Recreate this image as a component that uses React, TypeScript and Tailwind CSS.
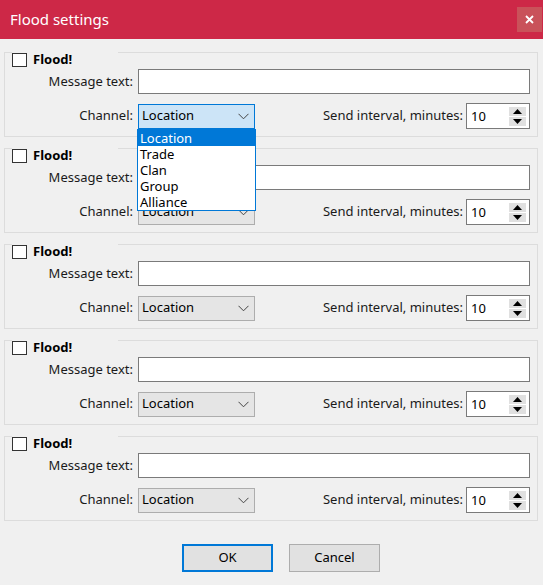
import React from "react";

const FONT = { fontFamily: '"Segoe UI", "Noto Sans", "DejaVu Sans", sans-serif' };

function Chevron() {
  return (
    <svg width="11" height="7" viewBox="0 0 11 7" className="shrink-0">
      <polyline points="0.5,0.8 5.5,5.8 10.5,0.8" fill="none" stroke="#444" strokeWidth="1" />
    </svg>
  );
}

function Spin() {
  return (
    <div className="flex h-[26px] w-[64px] items-center border border-[#7a7a7a] bg-white pl-[4px] pr-[3px]">
      <span className="flex-1 text-[13px] leading-none text-black">10</span>
      <div className="flex flex-col gap-[1px]">
        <div className="flex h-[9px] w-[17px] items-center justify-center bg-[#e0e0e0]">
          <svg width="9" height="5" viewBox="0 0 9 5">
            <polygon points="0,5 4.5,0 9,5" fill="#000" />
          </svg>
        </div>
        <div className="flex h-[9px] w-[17px] items-center justify-center bg-[#e0e0e0]">
          <svg width="9" height="5" viewBox="0 0 9 5">
            <polygon points="0,0 9,0 4.5,5" fill="#000" />
          </svg>
        </div>
      </div>
    </div>
  );
}

function Group({ focused, open }: { focused?: boolean; open?: boolean }) {
  return (
    <div className="relative h-[85px] border border-[#dcdcdc] pt-[16px] pb-[8px] pr-[7px]">
      <div className="absolute left-[7px] top-[-1px] flex h-[15px] w-[106px] items-center gap-[6px] bg-[#f0f0f0]">
        <div className="h-[14px] w-[15px] border border-[#333] bg-white" />
        <span className="text-[13px] font-bold leading-none text-black">Flood!</span>
      </div>
      <div className="grid grid-cols-[128px_1fr] items-center gap-x-[5px] gap-y-[9px]">
        <span className="text-right text-[13px] text-[#1a1a1a]">Message text:</span>
        <div className="h-[25px] border border-[#7a7a7a] bg-white" />
        <span className="text-right text-[13px] text-[#1a1a1a]">Channel:</span>
        <div className="flex items-center">
          <div className="relative">
            <div
              className={
                focused
                  ? "flex h-[25px] w-[117px] items-center justify-between border border-[#0078d7] bg-[#cce4f7] pl-[3px] pr-[5px]"
                  : "flex h-[25px] w-[117px] items-center justify-between border border-[#adadad] bg-[#e5e5e5] pl-[3px] pr-[5px]"
              }
            >
              <span className="text-[13px] text-black">Location</span>
              <Chevron />
            </div>
            {open && (
              <div className="absolute left-[-1px] top-[25px] z-10 flex w-[119px] flex-col border border-[#0078d7] bg-white">
                <div className="h-[16px] bg-[#0078d7] pl-[2px] text-[13px] leading-[16px] text-white">Location</div>
                <div className="h-[16px] pl-[2px] text-[13px] leading-[16px] text-black">Trade</div>
                <div className="h-[16px] pl-[2px] text-[13px] leading-[16px] text-black">Clan</div>
                <div className="h-[16px] pl-[2px] text-[13px] leading-[16px] text-black">Group</div>
                <div className="h-[16px] pl-[2px] text-[13px] leading-[16px] text-black">Alliance</div>
              </div>
            )}
          </div>
          <span className="ml-auto mr-[3px] text-[13px] text-[#1a1a1a]">Send interval, minutes:</span>
          <Spin />
        </div>
      </div>
    </div>
  );
}

export default function App() {
  return (
    <div className="flex h-[585px] w-[543px] flex-col bg-[#f0f0f0]" style={FONT}>
      <div className="flex h-[39px] items-center bg-[#cd2847] pl-[10px] pr-[1px]">
        <span className="text-[15px] text-white">Flood settings</span>
        <div className="ml-auto flex h-[25px] w-[25px] items-center justify-center bg-[#c9525a]">
          <svg width="9" height="9" viewBox="0 0 9 9">
            <path d="M1 1 L8 8 M8 1 L1 8" stroke="#fff" strokeWidth="1.8" />
          </svg>
        </div>
      </div>
      <div className="flex flex-col gap-[11px] pl-[4px] pr-[5px] pt-[13px]">
        <Group focused open />
        <Group />
        <Group />
        <Group />
        <Group />
      </div>
      <div className="flex gap-[16px] pl-[182px] pt-[23px]">
        <div className="flex h-[28px] w-[91px] items-center justify-center border-2 border-[#0078d7] bg-[#e1e1e1] text-[13px] text-black">
          OK
        </div>
        <div className="flex h-[28px] w-[91px] items-center justify-center border border-[#adadad] bg-[#e1e1e1] text-[13px] text-black">
          Cancel
        </div>
      </div>
    </div>
  );
}
